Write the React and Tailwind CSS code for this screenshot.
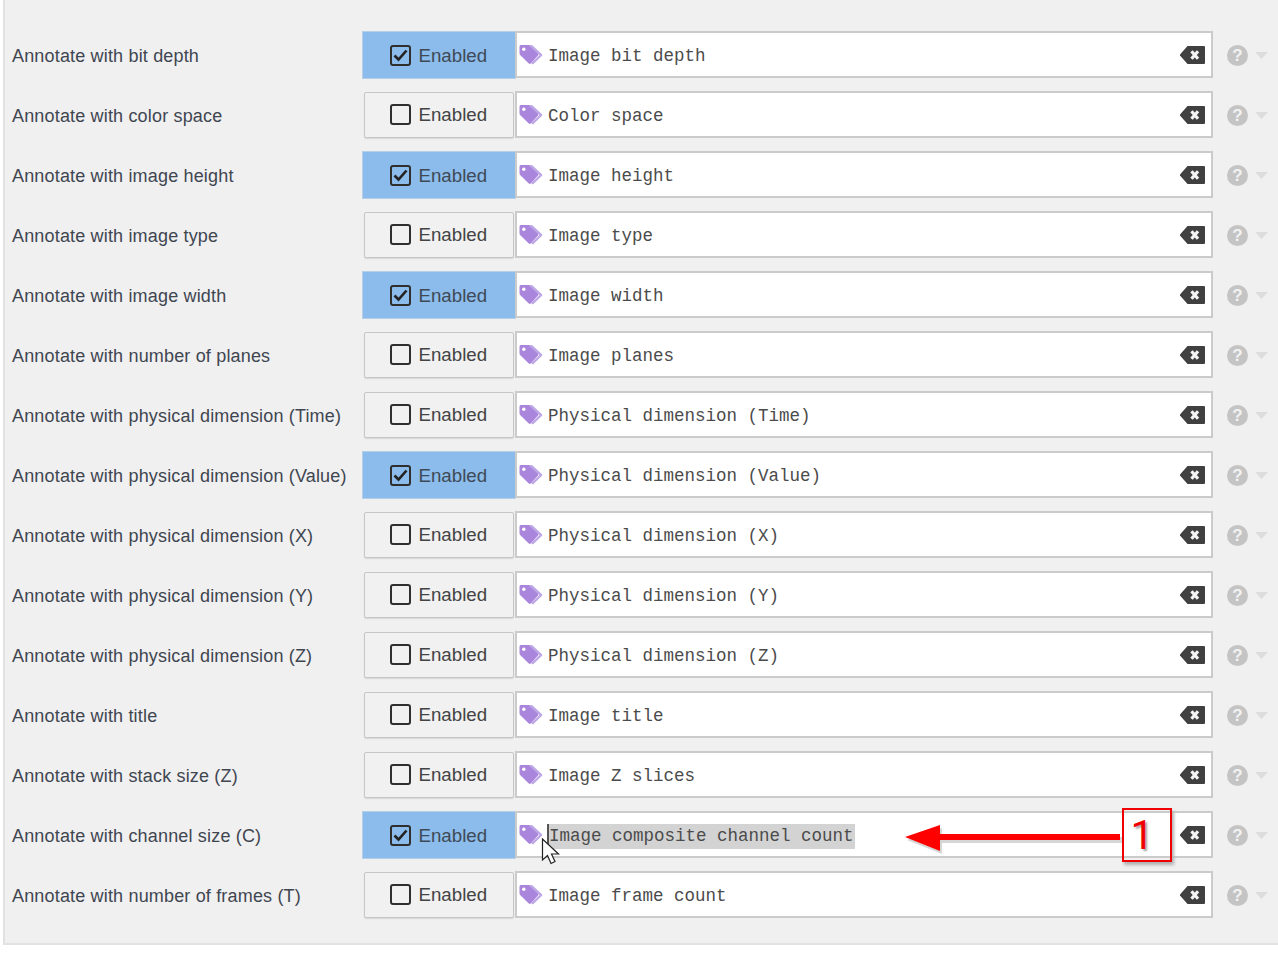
import React from "react";

const rows = [
  ["Annotate with bit depth", "Image bit depth", true],
  ["Annotate with color space", "Color space", false],
  ["Annotate with image height", "Image height", true],
  ["Annotate with image type", "Image type", false],
  ["Annotate with image width", "Image width", true],
  ["Annotate with number of planes", "Image planes", false],
  ["Annotate with physical dimension (Time)", "Physical dimension (Time)", false],
  ["Annotate with physical dimension (Value)", "Physical dimension (Value)", true],
  ["Annotate with physical dimension (X)", "Physical dimension (X)", false],
  ["Annotate with physical dimension (Y)", "Physical dimension (Y)", false],
  ["Annotate with physical dimension (Z)", "Physical dimension (Z)", false],
  ["Annotate with title", "Image title", false],
  ["Annotate with stack size (Z)", "Image Z slices", false],
  ["Annotate with channel size (C)", "Image composite channel count", true, true],
  ["Annotate with number of frames (T)", "Image frame count", false],
];

function Tags() {
  return (
    <svg width="24" height="22" viewBox="0 0 24 22" className="shrink-0">
      <path d="M10 1h3l10 9.200c.5.500.5 1.100 0 1.600L14 20.500l-1.800-1.300L20.500 11 10 1z" fill="#bda6e6" />
      <path d="M0.500 2.500C0.500 1.600 1.100 1 2 1h8l9 8.600c.6.600.6 1.400 0 2l-7.200 7.800c-.6.600-1.400.6-2 0L1.100 11C.700 10.600.500 10.200.500 9.600V2.500z" fill="#a985dc" />
      <circle cx="4.800" cy="5.200" r="1.700" fill="#ffffff" />
    </svg>
  );
}

function Backspace() {
  return (
    <svg width="25" height="18" viewBox="0 0 25 18" className="shrink-0">
      <path d="M7.500 0H24a1 1 0 0 1 1 1v16a1 1 0 0 1-1 1H7.500L0 9.500V8.500L7.500 0z" fill="#404040" />
      <path d="M11.500 5.200l6.500 7.600M18 5.200l-6.500 7.600" stroke="#f4f4f4" strokeWidth="3.200" fill="none" />
    </svg>
  );
}

function Help() {
  return (
    <div className="flex items-center gap-[7px] shrink-0 pt-[1px]">
      <div className="w-[21px] h-[21px] rounded-full bg-[#c4c4c4] flex items-center justify-center text-[#f2f2f2] text-[17px] font-bold leading-none font-['Liberation_Sans',sans-serif]">
        ?
      </div>
      <svg width="13" height="7" viewBox="0 0 13 7">
        <path d="M0 0h13L6.500 7z" fill="#dddddd" />
      </svg>
    </div>
  );
}

function Check({ on }) {
  return (
    <span className="w-[21px] h-[21px] border-2 border-[#2f2f2f] rounded-[3px] flex items-center justify-center shrink-0">
      {on && (
        <svg width="15" height="13" viewBox="0 0 15 13">
          <path d="M1.500 6.500l4 4L13.500 1.500" fill="none" stroke="#222222" strokeWidth="2.600" />
        </svg>
      )}
    </span>
  );
}

function Row({ label, value, on, selected }) {
  return (
    <div className="flex items-center h-[47px] mb-[13px] relative">
      <div className="w-[357px] pl-[7px] text-[18px] text-[#3f4650] whitespace-nowrap tracking-[0.17px] pt-[3px]">
        {label}
      </div>
      <div className="w-[153px] flex justify-center shrink-0">
        <div
          className={
            on
              ? "w-[154px] h-[48px] mt-[1px] bg-[#8bbcec] border border-[#b5cfe8] flex items-center pl-[27px] gap-[7px] text-[#3f4a55] shrink-0"
              : "w-[150px] h-[46px] bg-[#f1f1f1] border border-[#c6c6c6] rounded-[2px] shadow-[0_1px_1px_#d8d8d8] flex items-center pl-[25px] gap-[8px] text-[#444444] shrink-0"
          }
        >
          <Check on={on} />
          <span className={on ? "text-[18.700px] pt-[2px] pl-[1px]" : "text-[18.700px] pt-[2px]"}>Enabled</span>
        </div>
      </div>
      <div className="w-[698px] h-[47px] bg-white border-2 border-[#cbcbcb] flex items-center pl-[2px] pr-[6px] shrink-0">
        <Tags />
        <div className="ml-[5px] pt-[4px] flex-1 min-w-0 font-['Liberation_Mono',monospace] text-[17.500px] text-[#4b4b4b] whitespace-pre">
          <span className={selected ? "bg-[#d3d3d3] border-l-2 border-[#555555] -ml-[1px] inline-block leading-[25px] pr-[1px]" : ""}>
            {value}
          </span>
        </div>
        <Backspace />
      </div>
      <div className="ml-[14px]">
        <Help />
      </div>
    </div>
  );
}

function Overlays() {
  return (
    <>
      <svg width="240" height="40" viewBox="0 0 240 40" className="absolute left-[900px] top-[817px] overflow-visible">
        <path d="M5 20L40 8v9h180v6H40v11z" fill="#8a8a8a" opacity="0.35" transform="translate(2 3)" />
        <path d="M5 20L40 8v9h180v6H40v11z" fill="#ff0000" />
      </svg>
      <div className="absolute left-[1122px] top-[808px] w-[50px] h-[54px] pr-[10px] border-[2.500px] border-[#f00000] shadow-[2px_3px_3px_#b0b0b0] flex items-center justify-center font-['Roboto',sans-serif] text-[41px] leading-none text-[#f00000] [text-shadow:2px_2px_2px_#a8a8a8]">
        1
      </div>
      <svg width="20" height="30" viewBox="0 0 20 30" className="absolute left-[541px] top-[838px]">
        <path d="M1.500 1v21l5-4.500 3.500 8 4-2-3.500-7.500h7z" fill="#ffffff" stroke="#222222" strokeWidth="1.200" />
      </svg>
    </>
  );
}

export default function App() {
  return (
    <div className="relative w-[1278px] h-[959px] overflow-hidden bg-white font-['Liberation_Sans',sans-serif]">
      <div className="h-[945px] bg-[#f0f0f0] border-l-2 border-b-2 border-[#e2e2e2] ml-[3px] pt-[31px]">
        {rows.map(([label, value, on, selected]) => (
          <Row key={label} label={label} value={value} on={on} selected={selected} />
        ))}
      </div>
      <Overlays />
    </div>
  );
}
